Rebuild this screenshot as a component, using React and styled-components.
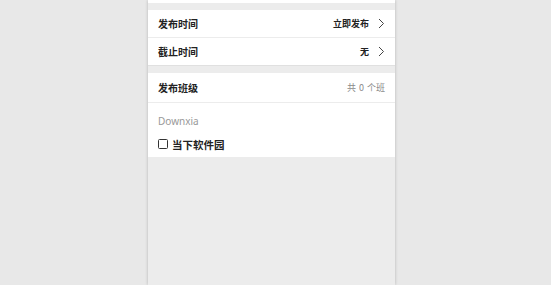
import React from 'react';
import styled, { createGlobalStyle } from 'styled-components';

const GlobalStyle = createGlobalStyle`
  html, body {
    margin: 0;
    padding: 0;
    background: #e8e8e8;
    font-family: "Noto Sans CJK SC", "Noto Sans", sans-serif;
  }
`;

const Page = styled.div`
  height: 285px;
  overflow: hidden;
  padding-left: 148px;
`;

const Phone = styled.div`
  width: 247px;
  height: 285px;
  background: #ececec;
  box-shadow: 0 0 3px rgba(0, 0, 0, 0.22);
`;

const CardEnd = styled.div`
  height: 3px;
  background: #fff;
`;

const Gap = styled.div`
  height: ${(p) => p.$h}px;
  background: #ececec;
  border-top: ${(p) => (p.$line ? '1px solid #e0e0e0' : 'none')};
  box-sizing: border-box;
`;

const Group = styled.div`
  background: #fff;
`;

const Row = styled.div`
  display: flex;
  align-items: center;
  justify-content: space-between;
  height: ${(p) => p.$h || 27}px;
  padding: 0 10px;
  border-bottom: ${(p) => (p.$divider ? '1px solid #ececec' : 'none')};
`;

const Label = styled.span`
  font-size: 10px;
  font-weight: 700;
  color: #222;
`;

const Value = styled.span`
  display: flex;
  align-items: center;
  gap: 9px;
  font-size: 9px;
  font-weight: ${(p) => (p.$muted ? 400 : 700)};
  color: ${(p) => (p.$muted ? '#8a8a8a' : '#222')};
  word-spacing: ${(p) => (p.$muted ? '1px' : '0')};
`;

const Section = styled.div`
  background: #fff;
  padding: 11px 10px 6px;
`;

const SchoolName = styled.div`
  font-family: "Noto Sans", "Noto Sans CJK SC", sans-serif;
  font-size: 10px;
  color: #999;
  height: 14px;
  line-height: 14px;
`;

const CheckRow = styled.label`
  display: flex;
  align-items: center;
  gap: 4px;
  margin-top: 9px;
  height: 14px;
  font-size: 10.5px;
  font-weight: 700;
  color: #222;
`;

const Box = styled.span`
  width: 8px;
  height: 8px;
  border: 1.3px solid #333;
  border-radius: 1.5px;
`;

const Chevron = () => (
  <svg width="7" height="11" viewBox="0 0 7 11">
    <polyline points="1,1 5.5,5.5 1,10" fill="none" stroke="#444" strokeWidth="1" />
  </svg>
);

export default function App() {
  return (
    <>
      <GlobalStyle />
      <Page>
        <Phone>
          <CardEnd />
          <Gap $h={7} />
          <Group>
            <Row $h={27} $divider>
              <Label>发布时间</Label>
              <Value>立即发布<Chevron /></Value>
            </Row>
            <Row $h={27}>
              <Label>截止时间</Label>
              <Value>无<Chevron /></Value>
            </Row>
          </Group>
          <Gap $h={8} $line />
          <Group>
            <Row $h={29} $divider>
              <Label>发布班级</Label>
              <Value $muted>共 0 个班</Value>
            </Row>
          </Group>
          <Section>
            <SchoolName>Downxia</SchoolName>
            <CheckRow>
              <Box />
              当下软件园
            </CheckRow>
          </Section>
        </Phone>
      </Page>
    </>
  );
}
